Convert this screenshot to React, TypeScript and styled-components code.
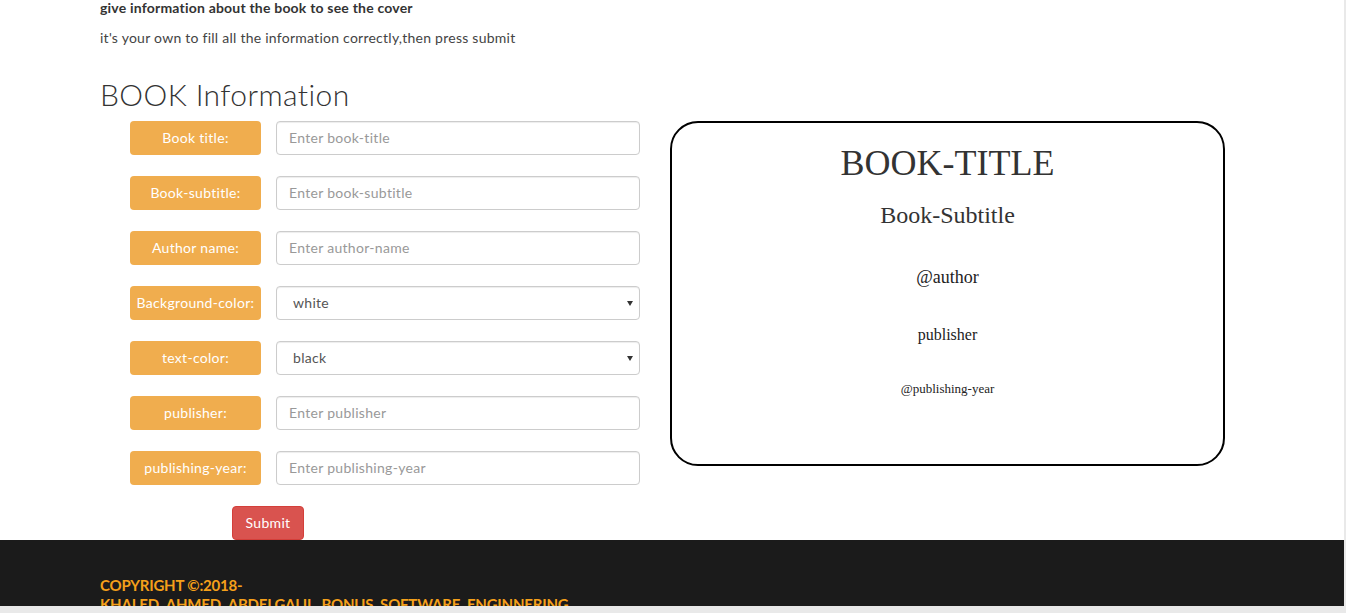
import * as React from 'react'
import styled, { createGlobalStyle } from 'styled-components'

const GlobalStyle = createGlobalStyle`
  html, body {
    margin: 0;
    padding: 0;
    background: #e9e9e9;
  }
  body {
    font-family: 'Lato', 'Open Sans', sans-serif;
    color: #333;
  }
  * {
    box-sizing: border-box;
  }
`

interface Field {
  label: string
  placeholder?: string
  options?: string[]
}

const fields: Field[] = [
  { label: 'Book title:', placeholder: 'Enter book-title' },
  { label: 'Book-subtitle:', placeholder: 'Enter book-subtitle' },
  { label: 'Author name:', placeholder: 'Enter author-name' },
  { label: 'Background-color:', options: ['white', 'black', 'red', 'blue'] },
  { label: 'text-color:', options: ['black', 'white', 'red', 'blue'] },
  { label: 'publisher:', placeholder: 'Enter publisher' },
  { label: 'publishing-year:', placeholder: 'Enter publishing-year' },
]

const App = () => {
  return (
    <Page>
      <GlobalStyle />
      <Main>
        <Lead>give information about the book to see the cover</Lead>
        <Hint>it's your own to fill all the information correctly,then press submit</Hint>
        <Heading>BOOK Information</Heading>
        <Columns>
          <Form onSubmit={(e) => e.preventDefault()}>
            {fields.map((field) => (
              <Row key={field.label}>
                <Label>{field.label}</Label>
                {field.options ? (
                  <SelectWrap>
                    <Select defaultValue={field.options[0]}>
                      {field.options.map((o) => (
                        <option key={o} value={o}>
                          {o}
                        </option>
                      ))}
                    </Select>
                  </SelectWrap>
                ) : (
                  <Input type="text" placeholder={field.placeholder} />
                )}
              </Row>
            ))}
            <SubmitButton type="submit">Submit</SubmitButton>
          </Form>
          <Cover>
            <CoverTitle>BOOK-TITLE</CoverTitle>
            <CoverSubtitle>Book-Subtitle</CoverSubtitle>
            <CoverLine size={18} gap={40}>@author</CoverLine>
            <CoverLine size={16} gap={38}>publisher</CoverLine>
            <CoverLine size={13} gap={38}>@publishing-year</CoverLine>
          </Cover>
        </Columns>
      </Main>
      <Footer>
        <FooterText>COPYRIGHT ©:2018-</FooterText>
        <FooterText>KHALED_AHMED_ABDELGALIL_BONUS_SOFTWARE_ENGINNERING</FooterText>
      </Footer>
    </Page>
  )
}

const Page = styled.div`
  width: 1344px;
  height: 606px;
  overflow: hidden;
  background: #fff;
  display: flex;
  flex-direction: column;
`

const Main = styled.main`
  padding-left: 100px;
  height: 540px;
`

const Lead = styled.p`
  margin: 0;
  font-size: 14px;
  font-weight: 700;
  line-height: 16px;
  letter-spacing: 0.2px;
  color: #333;
`

const Hint = styled.p`
  margin: 12px 0 0;
  font-size: 14px;
  line-height: 20px;
  letter-spacing: 0.25px;
  color: #444;
`

const Heading = styled.h2`
  margin: 30px 0 0;
  font-size: 30px;
  font-weight: 300;
  line-height: 33px;
  letter-spacing: 0.4px;
  color: #333;
`

const Columns = styled.div`
  display: flex;
  align-items: flex-start;
  margin-top: 10px;
`

const Form = styled.form`
  display: flex;
  flex-direction: column;
  gap: 21px;
  width: 570px;
  padding-left: 30px;
`

const Row = styled.div`
  display: flex;
  align-items: center;
  gap: 15px;
`

const Label = styled.label`
  flex: 0 0 131px;
  height: 34px;
  display: flex;
  align-items: center;
  justify-content: center;
  padding-bottom: 2px;
  background: #f0ad4e;
  border-radius: 4px;
  color: #fff;
  font-size: 14px;
  letter-spacing: 0.3px;
  white-space: nowrap;
  overflow: hidden;
`

const controlStyles = `
  width: 364px;
  height: 34px;
  border: 1px solid #ccc;
  border-radius: 4px;
  background: #fff;
  font-family: 'Lato', 'Open Sans', sans-serif;
  font-size: 14px;
  letter-spacing: 0.3px;
  color: #555;
  box-shadow: inset 0 1px 1px rgba(0, 0, 0, 0.075);
  outline: none;
`

const Input = styled.input`
  ${controlStyles}
  padding: 4px 12px 6px;
  &::placeholder {
    color: #999;
  }
`

const SelectWrap = styled.div`
  position: relative;
  &::after {
    content: '';
    position: absolute;
    right: 7px;
    top: 15px;
    border-left: 3.5px solid transparent;
    border-right: 3.5px solid transparent;
    border-top: 5px solid #333;
    pointer-events: none;
  }
`

const Select = styled.select`
  ${controlStyles}
  appearance: none;
  padding: 4px 16px 6px;
`

const SubmitButton = styled.button`
  align-self: flex-start;
  margin-left: 102px;
  width: 72px;
  height: 34px;
  padding-bottom: 2px;
  border: 1px solid #d43f3a;
  border-radius: 4px;
  background: #d9534f;
  color: #fff;
  font-family: 'Lato', 'Open Sans', sans-serif;
  font-size: 14px;
  letter-spacing: 0.3px;
  cursor: pointer;
`

const Cover = styled.div`
  width: 555px;
  height: 345px;
  border: 2px solid #000;
  border-radius: 28px;
  display: flex;
  flex-direction: column;
  align-items: center;
  padding-top: 20px;
  font-family: 'Liberation Serif', 'Times New Roman', serif;
  color: #333;
`

const CoverTitle = styled.h1`
  margin: 0;
  font-size: 36px;
  font-weight: 400;
  line-height: 40px;
`

const CoverSubtitle = styled.h3`
  margin: 19px 0 0;
  font-size: 24px;
  font-weight: 400;
  line-height: 1.1;
`

const CoverLine = styled.p<{ size: number; gap: number }>`
  margin: ${(p) => p.gap}px 0 0;
  font-size: ${(p) => p.size}px;
  line-height: 1.1;
  color: #222;
`

const Footer = styled.footer`
  flex: 1;
  background: #1b1b1b;
  padding: 36px 0 0 100px;
`

const FooterText = styled.p`
  margin: 0;
  font-size: 15px;
  font-weight: 700;
  line-height: 19px;
  color: #f5a01a;
  letter-spacing: -0.2px;
`

export default App
